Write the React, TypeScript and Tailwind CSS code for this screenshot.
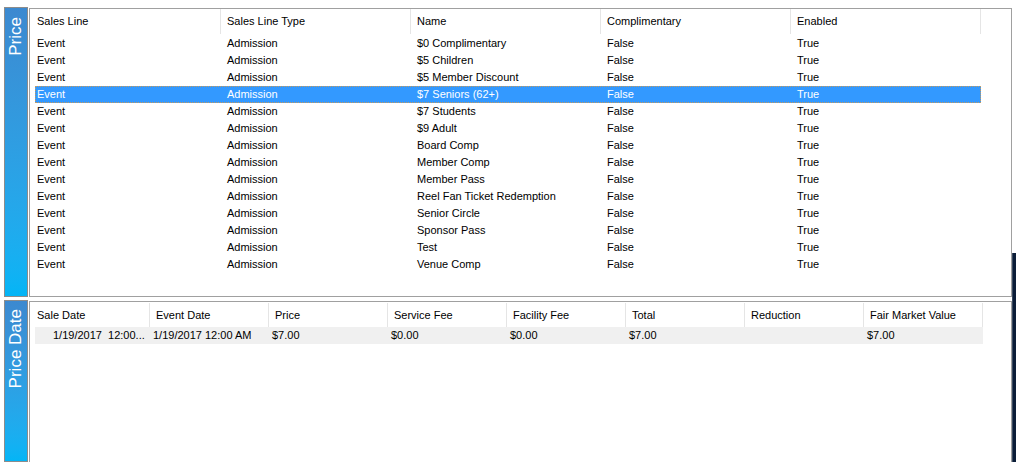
const priceRows = [
  '$0 Complimentary',
  '$5 Children',
  '$5 Member Discount',
  '$7 Seniors (62+)',
  '$7 Students',
  '$9 Adult',
  'Board Comp',
  'Member Comp',
  'Member Pass',
  'Reel Fan Ticket Redemption',
  'Senior Circle',
  'Sponsor Pass',
  'Test',
  'Venue Comp',
];

const priceCols = ['Sales Line', 'Sales Line Type', 'Name', 'Complimentary', 'Enabled'];
const dateCols = ['Sale Date', 'Event Date', 'Price', 'Service Fee', 'Facility Fee', 'Total', 'Reduction', 'Fair Market Value'];
const dateRow = ['1/19/2017 12:00 AM', '$7.00', '$0.00', '$0.00', '$7.00', '', '$7.00'];

// rotate-180 flips the padding, so pb ends up at the top of the tab
function SideTab({ label, pad }: { label: string; pad: string }) {
  return (
    <div className="ml-[4px] w-[24px] shrink-0 border border-[#8c8c8c] bg-linear-to-b from-[#3c89d0] to-[#03b5f6] flex flex-col items-center">
      <span className={`${pad} [writing-mode:vertical-rl] rotate-180 text-white text-[17px] leading-[22px] whitespace-nowrap`}>
        {label}
      </span>
    </div>
  );
}

export default function App() {
  return (
    <div className="w-[1016px] h-[462px] flex bg-white overflow-hidden text-[11px] text-black [font-family:'Liberation_Sans',Arial,sans-serif]">
      <div className="w-[1012px] flex flex-col pt-[7px]">
        {/* Price section */}
        <div className="h-[290px] flex">
          <SideTab label="Price" pad="pb-[9px]" />
          <div className="ml-[1px] mt-[1px] w-[983px] border border-[#a0a0a0] bg-white">
            <div className="h-[25px] flex pl-[1px] items-center">
              {priceCols.map((c) => (
                <div key={c} className="w-[190px] h-full pl-[6px] flex items-center border-r border-[#e5e5e5]">
                  {c}
                </div>
              ))}
            </div>
            <div className="ml-[5px] mt-[1px] w-[946px]">
              {priceRows.map((name, i) => {
                const sel = i === 3;
                return (
                  <div
                    key={name}
                    className={`h-[17px] flex items-center ${sel ? 'bg-[#3399ff] text-white outline-1 outline-dotted outline-[#c49a5e] -outline-offset-1' : ''}`}
                  >
                    <div className="w-[186px] pl-[2px]">Event</div>
                    <div className="w-[190px] pl-[6px]">Admission</div>
                    <div className="w-[190px] pl-[6px]">{name}</div>
                    <div className="w-[190px] pl-[6px]">False</div>
                    <div className="w-[190px] pl-[6px]">True</div>
                  </div>
                );
              })}
            </div>
          </div>
        </div>

        {/* Price Date section */}
        <div className="mt-[3px] flex-1 flex">
          <SideTab label="Price Date" pad="pb-[8px]" />
          <div className="ml-[1px] mt-[1px] w-[983px] border border-b-0 border-[#a0a0a0] bg-white">
            <div className="h-[25px] flex pl-[1px] pt-[1px]">
              {dateCols.map((c) => (
                <div key={c} className="w-[119px] h-full pl-[6px] flex items-center border-r border-[#e5e5e5]">
                  {c}
                </div>
              ))}
            </div>
            <div className="ml-[5px] w-[948px] h-[17px] flex items-center bg-[#f0f0f0]">
              <div className="w-[115px] pl-[18px] whitespace-nowrap overflow-hidden">1/19/2017&nbsp;&nbsp;12:00...</div>
              {dateRow.map((v, i) => (
                <div key={i} className="w-[119px] pl-[3px] whitespace-nowrap">
                  {v}
                </div>
              ))}
            </div>
          </div>
        </div>
      </div>
      <div className="w-[4px] flex flex-col">
        <div className="h-[253px] bg-white" />
        <div className="flex-1 bg-[#0b1d38] border-l border-[#3a4a60]" />
      </div>
    </div>
  );
}
